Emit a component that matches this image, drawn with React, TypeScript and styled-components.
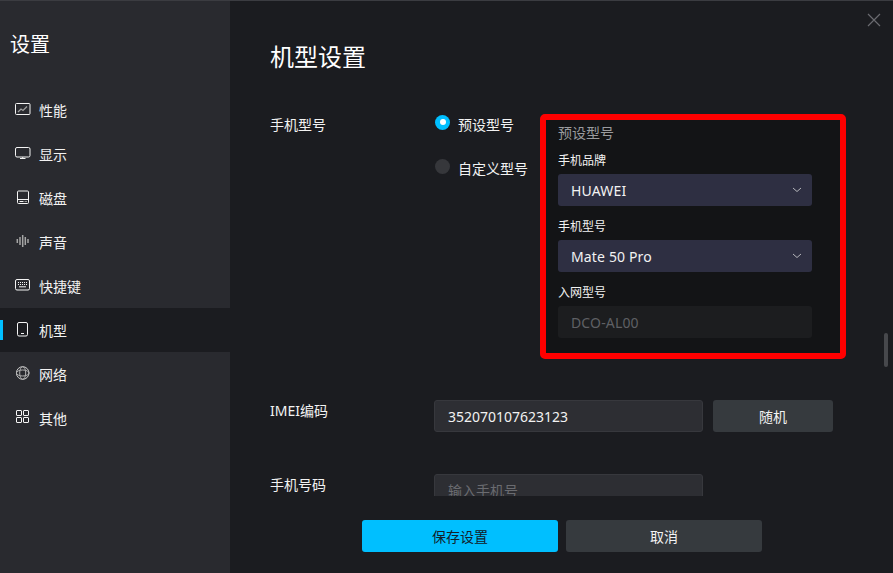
import React from "react";
import styled, { createGlobalStyle } from "styled-components";

const GlobalStyle = createGlobalStyle`
  html, body {
    margin: 0;
    padding: 0;
    background: #1b1c20;
  }
  * {
    box-sizing: border-box;
  }
`;

const fontStack = `"Noto Sans", "Noto Sans CJK SC", sans-serif`;

const Window = styled.div`
  width: 893px;
  height: 573px;
  display: flex;
  position: relative;
  overflow: hidden;
  background: #1b1c20;
  border-top: 1px solid #3b3c41;
  font-family: ${fontStack};
  color: #f2f2f2;
`;

const Sidebar = styled.aside`
  width: 230px;
  flex-shrink: 0;
  background: #292a2f;
  display: flex;
  flex-direction: column;
`;

const SidebarTitle = styled.div`
  height: 87px;
  padding: 30px 0 0 10px;
  font-size: 20px;
  line-height: 28px;
  color: #ffffff;
`;

const NavItem = styled.div<{ $active?: boolean }>`
  height: 44px;
  position: relative;
  display: flex;
  align-items: center;
  gap: 8px;
  padding-left: 15px;
  font-size: 14px;
  line-height: 20px;
  background: ${(p) => (p.$active ? "#1b1c20" : "transparent")};

  &::before {
    content: "";
    display: ${(p) => (p.$active ? "block" : "none")};
    position: absolute;
    left: 0;
    top: 12px;
    width: 3px;
    height: 20px;
    background: #00bfff;
  }
`;

const NavLabel = styled.span`
  padding-top: 2px;
`;

const Main = styled.main`
  flex: 1;
  display: flex;
  flex-direction: column;
  position: relative;
  min-width: 0;
`;

const PageTitle = styled.h1`
  margin: 0;
  height: 99px;
  padding: 39px 0 0 40px;
  font-size: 24px;
  line-height: 34px;
  font-weight: 400;
  color: #ffffff;
`;

const Scroller = styled.div`
  height: 396px;
  overflow: hidden;
  padding: 0 0 0 40px;
`;

const FormRow = styled.div<{ $gap: number }>`
  display: flex;
  margin-top: ${(p) => p.$gap}px;
`;

const RowLabel = styled.div<{ $top?: number }>`
  width: 164px;
  flex-shrink: 0;
  padding-top: ${(p) => p.$top ?? 0}px;
  font-size: 14px;
  line-height: 20px;
`;

const RadioColumn = styled.div`
  width: 106px;
  flex-shrink: 0;
  padding: 1px 0 0 1px;
  display: flex;
  flex-direction: column;
  gap: 24px;
`;

const RadioOption = styled.div`
  height: 20px;
  display: flex;
  align-items: center;
  gap: 8px;
  font-size: 14px;
  line-height: 20px;
  white-space: nowrap;
`;

const RadioDot = styled.span<{ $checked?: boolean }>`
  width: 15px;
  height: 15px;
  flex-shrink: 0;
  border-radius: 50%;
  position: relative;
  top: -3px;
  background: ${(p) => (p.$checked ? "#00bfff" : "#36373b")};

  &::after {
    content: "";
    display: ${(p) => (p.$checked ? "block" : "none")};
    position: absolute;
    left: 4.5px;
    top: 4.5px;
    width: 6px;
    height: 6px;
    border-radius: 50%;
    background: #ffffff;
  }
`;

const Highlight = styled.section`
  width: 306px;
  height: 245px;
  border: 6px solid #ff0000;
  border-radius: 5px;
  background: #131416;
  padding: 3px 28px 0 12px;
`;

const PanelTitle = styled.div`
  font-size: 14px;
  line-height: 20px;
  color: #9a9b9e;
`;

const FieldLabel = styled.div`
  margin-top: 8px;
  font-size: 12px;
  line-height: 20px;
  height: 20px;
`;

const SelectBox = styled.div<{ $disabled?: boolean }>`
  height: 32px;
  margin-top: 3px;
  margin-bottom: 11px;
  border-radius: 3px;
  display: flex;
  align-items: center;
  justify-content: space-between;
  padding: 2px 10px 0 13px;
  font-size: 14px;
  line-height: 20px;
  letter-spacing: 0.15px;
  background: ${(p) => (p.$disabled ? "#1c1d1f" : "#2e2f42")};
  color: ${(p) => (p.$disabled ? "#5f6064" : "#f2f2f2")};

  svg {
    display: block;
    margin-top: -2px;
  }
`;

const TextBox = styled.div<{ $placeholder?: boolean }>`
  width: 269px;
  height: 32px;
  flex-shrink: 0;
  padding: 2px 10px 0 13px;
  display: flex;
  align-items: center;
  background: #2d2e33;
  border: 1px solid #37383d;
  border-radius: 3px;
  font-size: 14px;
  line-height: 20px;
  color: ${(p) => (p.$placeholder ? "#6a6b70" : "#f2f2f2")};
`;

const RandomButton = styled.div`
  width: 120px;
  height: 32px;
  margin-left: 10px;
  padding-top: 2px;
  background: #363a3e;
  border-radius: 3px;
  display: flex;
  align-items: center;
  justify-content: center;
  font-size: 14px;
  line-height: 20px;
`;

const Footer = styled.div`
  display: flex;
  gap: 8px;
  padding: 24px 0 0 132px;
`;

const FooterButton = styled.div<{ $primary?: boolean }>`
  width: 196px;
  height: 32px;
  padding-top: 2px;
  border-radius: 3px;
  display: flex;
  align-items: center;
  justify-content: center;
  font-size: 14px;
  line-height: 20px;
  background: ${(p) => (p.$primary ? "#00bfff" : "#363a3e")};
  color: ${(p) => (p.$primary ? "#13212a" : "#f2f2f2")};
`;

const CloseButton = styled.svg`
  position: absolute;
  right: 12px;
  top: 12px;
`;

const ScrollThumb = styled.div`
  position: absolute;
  right: 5px;
  top: 332px;
  width: 4px;
  height: 34px;
  border-radius: 2px;
  background: #47484c;
`;

const NavIcon = styled.svg`
  flex-shrink: 0;
  fill: none;
  stroke: #f4f4f4;
  stroke-width: 1;
`;

const icons: Record<string, React.ReactNode> = {
  perf: (
    <>
      <rect x="0.5" y="1.5" width="14.5" height="11" rx="1" />
      <path d="M3 10l3-3 2 1.5 4-4" stroke="#a0a0a0" strokeWidth="1.3" />
    </>
  ),
  display: (
    <>
      <rect x="0.5" y="1.5" width="14.5" height="9.5" rx="1.5" />
      <path d="M7.75 11v1.5M5 12.5h5.5" />
    </>
  ),
  disk: (
    <>
      <rect x="2.5" y="1" width="11" height="12.5" rx="1" />
      <path d="M2.5 9.5h11M4.5 11.5h4" />
      <path d="M9.5 11.5h2.5" stroke="#999" />
    </>
  ),
  sound: (
    <path
      d="M2.3 5v4M5 3v8M7.7 1v12M10.3 3v8M13 5v4"
      stroke="#a5a5a5"
      strokeWidth="1.5"
    />
  ),
  keys: (
    <>
      <rect x="0.5" y="1.5" width="14" height="10.5" rx="1.5" />
      <path d="M3 4.5h9M3 6.5h9" strokeDasharray="1 1" />
      <path d="M4 8.8h7" />
    </>
  ),
  phone: (
    <>
      <rect x="2.5" y="0.5" width="10" height="13.5" rx="1.5" />
      <path d="M6 11.5h3" />
    </>
  ),
  net: (
    <>
      <circle cx="7.7" cy="7" r="6.3" stroke="#d0d0d0" />
      <ellipse cx="7.7" cy="7" rx="3" ry="6.3" stroke="#b0b0b0" />
      <ellipse cx="7.7" cy="7" rx="6.3" ry="3" stroke="#b0b0b0" />
    </>
  ),
  other: (
    <>
      <rect x="1.5" y="0.5" width="5" height="5" rx="0.5" />
      <rect x="8.5" y="0.5" width="5" height="5" rx="0.5" />
      <rect x="1.5" y="7.5" width="5" height="5" rx="0.5" />
      <rect x="8.5" y="7.5" width="5" height="5" rx="0.5" />
    </>
  ),
};

const navItems = [
  { key: "perf", label: "性能" },
  { key: "display", label: "显示" },
  { key: "disk", label: "磁盘" },
  { key: "sound", label: "声音" },
  { key: "keys", label: "快捷键" },
  { key: "phone", label: "机型", active: true },
  { key: "net", label: "网络" },
  { key: "other", label: "其他" },
];

const Chevron = () => (
  <svg width="10" height="6" viewBox="0 0 10 6" fill="none">
    <path d="M1 1l4 3.5L9 1" stroke="#b5b6bb" strokeWidth="1" />
  </svg>
);

const App: React.FC = () => {
  return (
    <>
      <GlobalStyle />
      <Window>
        <Sidebar>
          <SidebarTitle>设置</SidebarTitle>
          {navItems.map((item) => (
            <NavItem key={item.key} $active={item.active}>
              <NavIcon width="16" height="16" viewBox="0 0 16 16">
                {icons[item.key]}
              </NavIcon>
              <NavLabel>{item.label}</NavLabel>
            </NavItem>
          ))}
        </Sidebar>
        <Main>
          <PageTitle>机型设置</PageTitle>
          <Scroller>
            <FormRow $gap={14}>
              <RowLabel $top={1}>手机型号</RowLabel>
              <RadioColumn>
                <RadioOption>
                  <RadioDot $checked />
                  预设型号
                </RadioOption>
                <RadioOption>
                  <RadioDot />
                  自定义型号
                </RadioOption>
              </RadioColumn>
              <Highlight>
                <PanelTitle>预设型号</PanelTitle>
                <FieldLabel>手机品牌</FieldLabel>
                <SelectBox>
                  HUAWEI
                  <Chevron />
                </SelectBox>
                <FieldLabel>手机型号</FieldLabel>
                <SelectBox>
                  Mate 50 Pro
                  <Chevron />
                </SelectBox>
                <FieldLabel>入网型号</FieldLabel>
                <SelectBox $disabled>DCO-AL00</SelectBox>
              </Highlight>
            </FormRow>
            <FormRow $gap={41}>
              <RowLabel $top={1}>IMEI编码</RowLabel>
              <TextBox>352070107623123</TextBox>
              <RandomButton>随机</RandomButton>
            </FormRow>
            <FormRow $gap={42}>
              <RowLabel $top={1}>手机号码</RowLabel>
              <TextBox $placeholder>输入手机号</TextBox>
            </FormRow>
          </Scroller>
          <Footer>
            <FooterButton $primary>保存设置</FooterButton>
            <FooterButton>取消</FooterButton>
          </Footer>
          <ScrollThumb />
          <CloseButton width="14" height="14" viewBox="0 0 14 14" fill="none">
            <path d="M1 1l12 12M13 1L1 13" stroke="#6a6b70" strokeWidth="1.2" />
          </CloseButton>
        </Main>
      </Window>
    </>
  );
};

export default App;
